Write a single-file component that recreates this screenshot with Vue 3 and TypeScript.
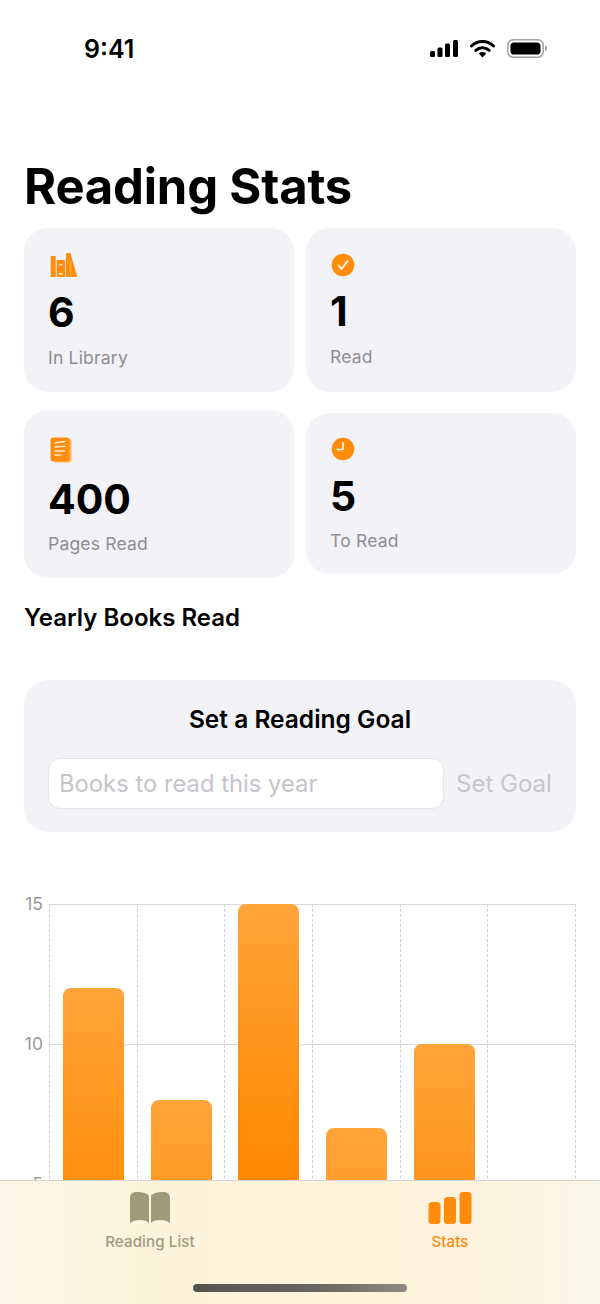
<script setup lang="ts">
const bars: number[] = [12, 8, 15, 7, 10, 0]
</script>

<template>
  <div class="screen">
    <header class="status">
      <span class="time">9:41</span>
      <div class="status-icons">
        <svg width="28" height="17" viewBox="0 0 28 17">
          <rect x="0" y="11" width="5" height="6" rx="1.500" fill="#000" />
          <rect x="7.500" y="7.500" width="5" height="9.500" rx="1.500" fill="#000" />
          <rect x="15" y="3.500" width="5" height="13.500" rx="1.500" fill="#000" />
          <rect x="23" y="0" width="5" height="17" rx="1.500" fill="#000" />
        </svg>
        <svg width="25" height="18" viewBox="0 0 25 18">
          <path d="M1.500 6a15.800 15.800 0 0 1 22 0" fill="none" stroke="#000" stroke-width="3" stroke-linecap="round" />
          <path d="M5.800 10.300a10 10 0 0 1 13.400 0" fill="none" stroke="#000" stroke-width="3" stroke-linecap="round" />
          <path d="M8.800 13.500a5.400 5.400 0 0 1 7.400 0L12.500 17.600z" fill="#000" />
        </svg>
        <svg width="40" height="19" viewBox="0 0 40 19">
          <rect x="0.750" y="0.750" width="35.500" height="17.500" rx="5.500" fill="none" stroke="#a2a2a2" stroke-width="1.500" />
          <rect x="3.500" y="3.500" width="30" height="12" rx="3.600" fill="#000" />
          <path d="M38 6.500c1.300.5 2 1.600 2 3s-.7 2.500-2 3z" fill="#a2a2a2" />
        </svg>
      </div>
    </header>

    <main class="content">
      <h1 class="title">Reading Stats</h1>

      <section class="stats">
        <div class="col">
          <article class="card card-a">
            <svg class="icon" width="28" height="24" viewBox="0 0 28 24">
              <rect x="0.700" y="3" width="5" height="21" rx="0.800" fill="#ff8c0a" />
              <rect x="6.700" y="7" width="8.500" height="17" rx="0.800" fill="#ff8c0a" />
              <path d="M16 0.800c0-.4.300-.7.700-.7h3c.4 0 .7.200.8.600L27 22.800c.1.700-.2 1.200-.9 1.200H16.800c-.5 0-.8-.3-.8-.8z" fill="#ff8c0a" />
              <path d="M20.700 8v16" stroke="#ffc27e" stroke-width="0.800" fill="none" />
              <rect x="9" y="11" width="3.500" height="1.600" fill="#fde6c4" />
              <rect x="9" y="20" width="3.500" height="1.600" fill="#fde6c4" />
            </svg>
            <div class="num">6</div>
            <div class="label">In Library</div>
          </article>
          <article class="card card-b">
            <svg class="icon" width="22" height="26" viewBox="0 0 22 26">
              <path d="M4 2h15a2.500 2.500 0 0 1 2.500 2.500V23a2.500 2.500 0 0 1-2.500 2.500H5z" fill="#ffb566" />
              <rect x="0.500" y="0.500" width="19" height="24" rx="2.800" fill="#ff8c0a" />
              <path d="M5 6l10-1.500M5 10l10-.8M5 14h10M5 18h6" stroke="#ffe9cf" stroke-width="1.400" stroke-linecap="round" fill="none" />
            </svg>
            <div class="num">400</div>
            <div class="label">Pages Read</div>
          </article>
        </div>
        <div class="col">
          <article class="card card-c">
            <svg class="icon" width="24" height="24" viewBox="0 0 24 24">
              <circle cx="12" cy="12" r="11.300" fill="#ff8c0a" />
              <path d="M7.500 12.500l3 3.500 6-8" fill="none" stroke="#fff" stroke-width="1.800" stroke-linecap="round" stroke-linejoin="round" />
            </svg>
            <div class="num">1</div>
            <div class="label">Read</div>
          </article>
          <article class="card card-d">
            <svg class="icon" width="24" height="24" viewBox="0 0 24 24">
              <circle cx="12" cy="12" r="11.300" fill="#ff8c0a" />
              <path d="M12 5.800v6.700H6" fill="none" stroke="#fff" stroke-width="1.600" stroke-linecap="round" stroke-linejoin="round" />
            </svg>
            <div class="num">5</div>
            <div class="label">To Read</div>
          </article>
        </div>
      </section>

      <h2 class="section">Yearly Books Read</h2>

      <section class="goal">
        <h3 class="goal-title">Set a Reading Goal</h3>
        <div class="goal-row">
          <input class="goal-input" type="text" placeholder="Books to read this year" />
          <button class="goal-btn" type="button">Set Goal</button>
        </div>
      </section>

      <section class="chart">
        <div class="axis">
          <span class="tick">15</span>
          <span class="tick">10</span>
          <span class="tick">5</span>
        </div>
        <div class="plot">
          <div class="hline hline-top"></div>
          <div class="hline hline-mid"></div>
          <div v-for="(b, i) in bars" :key="i" class="slot">
            <div v-if="b > 0" class="bar" :style="{ height: b * 28 + 'px' }"></div>
          </div>
        </div>
      </section>
    </main>

    <nav class="tabbar">
      <div class="tab">
        <svg width="40" height="32" viewBox="0 0 40 32">
          <path d="M0 5.500C0 2 2.500 0 7 0c5 0 11 1.300 12 4v27c-1.500-2-4.500-3-9-3-4.500 0-7.500 1-9 2.500-.6.500-1 .3-1-.5z" fill="#a09a79" />
          <path d="M40 5.500C40 2 37.500 0 33 0c-5 0-11 1.300-12 4v27c1.500-2 4.500-3 9-3 4.500 0 7.500 1 9 2.500.6.500 1 .3 1-.5z" fill="#a09a79" />
        </svg>
        <span class="tab-label">Reading List</span>
      </div>
      <div class="tab tab-active">
        <svg width="44" height="32" viewBox="0 0 44 32">
          <rect x="0.500" y="10" width="12" height="22" rx="3.500" fill="#ff8c0a" />
          <rect x="16" y="5" width="12" height="27" rx="3.500" fill="#ff8c0a" />
          <rect x="31.500" y="0" width="12" height="32" rx="3.500" fill="#ff8c0a" />
        </svg>
        <span class="tab-label">Stats</span>
      </div>
      <div class="home-indicator"></div>
    </nav>
  </div>
</template>

<style>
html, body { margin: 0; background: #fff; }
</style>

<style scoped>
.screen {
  position: relative;
  width: 600px;
  height: 1304px;
  overflow: hidden;
  background: #fff;
  color: #000;
  font-family: Inter, "Noto Sans", sans-serif;
}
.status {
  height: 98px;
  box-sizing: border-box;
  padding: 31px 53px 0 84px;
  display: flex;
  justify-content: space-between;
  align-items: flex-start;
}
.time {
  font-size: 25px;
  font-weight: 600;
  line-height: 36px;
}
.status-icons {
  display: flex;
  align-items: center;
  gap: 12px;
  margin-top: 8px;
}
.content {
  padding: 0 24px;
}
.title {
  margin: 0;
  height: 130px;
  box-sizing: border-box;
  padding-top: 60px;
  font-size: 49px;
  line-height: 58px;
  font-weight: 700;
  letter-spacing: -0.2px;
}
.stats {
  display: flex;
  gap: 12px;
}
.col {
  flex: 1;
  display: flex;
  flex-direction: column;
}
.card {
  box-sizing: border-box;
  background: #f2f2f7;
  border-radius: 24px;
  padding: 0 24px;
  display: flex;
  flex-direction: column;
  align-items: flex-start;
}
.card-a { height: 164px; padding-top: 25px; }
.card-b { height: 168px; margin-top: 18px; padding-top: 27px; }
.card-c { height: 164px; padding-top: 25px; }
.card-d { height: 161px; margin-top: 21px; padding-top: 24px; }
.icon { display: block; margin-left: 2px; }
.card-c .icon, .card-d .icon { margin-left: 1px; }
.num {
  font-size: 41px;
  font-weight: 700;
  line-height: 52px;
  margin-top: 8px;
}
.card-a .num, .card-d .num { margin-top: 9px; }
.card-b .num { margin-top: 10px; }
.label {
  font-size: 17.500px;
  line-height: 24px;
  color: #8e8e93;
  margin-top: 7px;
  letter-spacing: 0.2px;
}
.card-a .label, .card-c .label { margin-top: 8px; }
.section {
  margin: 25px 0 0;
  height: 77px;
  font-size: 24px;
  line-height: 30px;
  font-weight: 600;
}
.goal {
  box-sizing: border-box;
  height: 152px;
  background: #f2f2f7;
  border-radius: 24px;
  padding: 24px 24px 0;
}
.goal-title {
  margin: 0;
  text-align: center;
  font-size: 24.500px;
  line-height: 30px;
  font-weight: 600;
}
.goal-row {
  display: flex;
  align-items: center;
  gap: 12px;
  margin-top: 24px;
}
.goal-input {
  box-sizing: border-box;
  flex: none;
  width: 396px;
  height: 51px;
  padding: 0 10px;
  background: #fff;
  border: 1px solid #e5e5ea;
  border-radius: 12px;
  font-family: inherit;
  font-size: 23.800px;
  outline: none;
}
.goal-input::placeholder {
  color: #c5c5c9;
  opacity: 1;
}
.goal-btn {
  padding: 0;
  border: 0;
  background: none;
  font-family: inherit;
  font-size: 24px;
  white-space: nowrap;
  color: #c6c6cb;
}
.chart {
  display: flex;
  margin-top: 72px;
  height: 420px;
}
.axis {
  width: 25px;
  box-sizing: border-box;
  padding-right: 6px;
  display: flex;
  flex-direction: column;
  align-items: flex-end;
  gap: 116px;
  margin-top: -12px;
}
.tick {
  font-size: 17.500px;
  line-height: 24px;
  color: #98989c;
}
.plot {
  position: relative;
  flex: none;
  width: 527px;
  box-sizing: border-box;
  border-right: 1px dashed #cfcfd2;
  display: flex;
  align-items: flex-end;
}
.slot {
  position: relative;
  flex: 1;
  height: 100%;
  box-sizing: border-box;
  border-left: 1px dashed #cfcfd2;
  display: flex;
  align-items: flex-end;
  justify-content: center;
}
.bar {
  width: 61px;
  border-radius: 8px 8px 0 0;
  background: linear-gradient(#ffa439 0, #ff8800 270px);
}
.hline {
  position: absolute;
  left: 0;
  right: 0;
  height: 1px;
  background: #d8d8da;
}
.hline-top { top: 0; }
.hline-mid { top: 140px; }
.tabbar {
  position: absolute;
  left: 0;
  right: 0;
  bottom: 0;
  height: 124px;
  box-sizing: border-box;
  display: flex;
  border-top: 1px solid #d4d4d0;
  background: linear-gradient(90deg, #fbf7e8 0%, #fdf3dc 25%, #fef3dc 55%, #fdf3de 80%, #f9f7ea 100%);
}
.tab {
  flex: 1;
  display: flex;
  flex-direction: column;
  align-items: center;
  padding-top: 11px;
  color: #a09a80;
}
.tab-active {
  color: #ff8c14;
}
.tab-label {
  margin-top: 6px;
  font-size: 15px;
  line-height: 24px;
  font-weight: 500;
  letter-spacing: 0.150px;
}
.home-indicator {
  position: absolute;
  left: 193px;
  bottom: 12px;
  width: 214px;
  height: 8px;
  border-radius: 4px;
  background: linear-gradient(90deg, #56534c, #6a675f 60%, #8d8a82);
}
</style>
